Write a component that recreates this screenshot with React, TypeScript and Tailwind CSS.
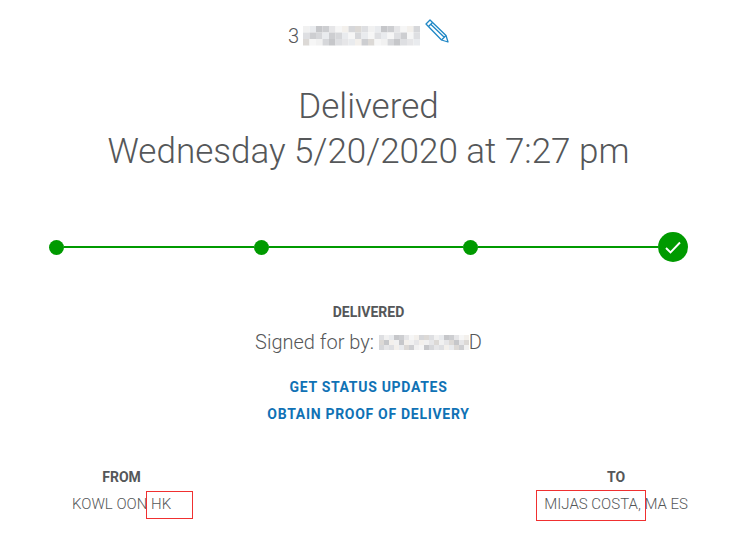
import React from 'react';

const mosaicColors = ['#e6e6e8', '#d6d7da', '#f1f1f1', '#cdced1', '#f3f0ec', '#dedfe2', '#c6c7ca', '#f6f6f6', '#dcd9d6', '#e9ebee'];

// pixelated patch that hides part of the number
const Mosaic: React.FC<{ cols: number; rows: number; cell: number; seed: number }> = ({ cols, rows, cell, seed }) => {
  const cells = [];
  for (let y = 0; y < rows; y++) {
    for (let x = 0; x < cols; x++) {
      const c = mosaicColors[(x * 7 + y * 3 + seed + ((x * y) % 4)) % mosaicColors.length];
      cells.push(<rect key={`${x}-${y}`} x={x * cell} y={y * cell} width={cell} height={cell} fill={c} />);
    }
  }
  return (
    <svg width={cols * cell} height={rows * cell} className="block shrink-0">
      {cells}
    </svg>
  );
};

const Dot = () => <div className="h-[15px] w-[15px] shrink-0 rounded-full bg-[#009a00]" />;

const Segment: React.FC<{ width: string }> = ({ width }) => <div className={`h-[2px] ${width} bg-[#009a00]`} />;

export default function App() {
  return (
    <div className="relative h-[533px] w-[745px] overflow-hidden bg-white font-['Roboto',sans-serif] text-[#555759]">
      <div className="w-[737px]">
        <div className="flex h-[48px] items-end justify-center">
          <div className="flex h-[24px] items-center">
            <span className="text-[20px] font-light leading-[24px]">3</span>
            <span className="ml-[4px]">
              <Mosaic cols={18} rows={3} cell={6.5} seed={2} />
            </span>
            <svg width="24" height="24" viewBox="0 0 24 24" className="mb-[11px] ml-[5px]" fill="none" stroke="#1f87c5" strokeWidth="1.3" strokeLinejoin="round">
              <path d="M1 5 L5 1 L21 16.5 L23 23 L16.5 21 Z" />
              <path d="M3.5 7.5 L7.5 3.5 M6 5.5 L19 18 M16.5 21 L21 16.5" />
            </svg>
          </div>
        </div>

        <div className="mt-[36px] text-center text-[35px] font-light leading-[45px]">
          <div>Delivered</div>
          <div>Wednesday 5/20/2020 at 7:27 pm</div>
        </div>
      </div>

      <div className="mt-[56px] flex h-[34px] items-center pl-[49px]">
        <Dot />
        <Segment width="w-[190px]" />
        <Dot />
        <Segment width="w-[194px]" />
        <Dot />
        <Segment width="w-[180px]" />
        <div className="flex h-[30px] w-[30px] shrink-0 items-center justify-center rounded-full bg-[#009a00]">
          <svg width="16" height="13" viewBox="0 0 16 13" fill="none" stroke="#fff" strokeWidth="1.9">
            <path d="M1 7 L5.5 11.5 L15 1.5" />
          </svg>
        </div>
      </div>

      <div className="w-[737px]">
        <div className="mt-[39px] text-center text-[14px] font-bold leading-[18px]">DELIVERED</div>
        <div className="mt-[9px] flex items-center justify-center text-[20px] font-light leading-[24px]">
          <span>Signed for by:&nbsp;</span>
          <Mosaic cols={18} rows={3} cell={5} seed={5} />
          <span>D</span>
        </div>

        <div className="mt-[24px] text-center text-[14px] font-bold leading-[18px] tracking-[0.7px] text-[#1072b5]">GET STATUS UPDATES</div>
        <div className="mt-[9px] text-center text-[14px] font-bold leading-[18px] tracking-[0.7px] text-[#1072b5]">OBTAIN PROOF OF DELIVERY</div>
      </div>

      <div className="mt-[45px] flex justify-between pl-[72px] pr-[57px] text-[15px] leading-[18px]">
        <div className="text-center">
          <div className="text-[14px] font-bold">FROM</div>
          <div className="mt-[9px] font-light">KOWL OON HK</div>
        </div>
        <div className="text-center">
          <div className="text-[14px] font-bold">TO</div>
          <div className="mt-[9px] font-light">MIJAS COSTA, MA ES</div>
        </div>
      </div>

      <div className="absolute left-[146px] top-[491px] h-[28px] w-[47px] border border-[#f03030]" />
      <div className="absolute left-[536px] top-[490px] h-[31px] w-[110px] border border-[#f03030]" />
    </div>
  );
}
